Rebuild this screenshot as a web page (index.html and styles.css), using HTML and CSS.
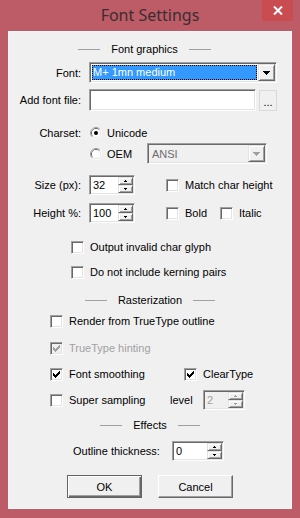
FILE: index.html
```html
<!DOCTYPE html>
<html lang="en">

<head>
    <meta charset="UTF-8">
    <meta name="viewport" content="width=device-width, initial-scale=1.0">
    <title>Font Settings</title>
    <link rel="stylesheet" href="styles.css">
</head>

<body>
    <div class="window">
        <div class="titlebar">
            <span class="title">Font Settings</span>
            <span class="close-btn">
                <svg width="10" height="9" viewBox="0 0 10 9"><path d="M1 0.5L9 8.5M9 0.5L1 8.5" stroke="#fff" stroke-width="2"/></svg>
            </span>
        </div>

        <div class="client">
            <!-- Font graphics -->
            <div class="section section-graphics"><span class="rule"></span><span>Font graphics</span><span class="rule"></span></div>

            <div class="row row-font">
                <span class="label">Font:</span>
                <div class="combo sunken font-combo">
                    <div class="combo-value"><span class="selected">M+ 1mn medium</span></div>
                    <span class="combo-drop raised"><svg width="7" height="4"><path d="M0 0H7V1H6V2H5V3H4V4H3V3H2V2H1V1H0Z"/></svg></span>
                </div>
            </div>

            <div class="row row-file">
                <span class="label">Add font file:</span>
                <div class="textbox sunken file-box"></div>
                <span class="browse-btn">...</span>
            </div>

            <div class="row row-charset">
                <span class="label">Charset:</span>
                <span class="option">
                    <svg class="radio" width="12" height="12">
                        <path d="M2.11 9.89A5.5 5.5 0 0 1 9.89 2.11" fill="none" stroke="#a0a0a0"/>
                        <path d="M9.89 2.11A5.5 5.5 0 0 1 2.11 9.89" fill="none" stroke="#fff"/>
                        <path d="M2.82 9.18A4.5 4.5 0 0 1 9.18 2.82" fill="none" stroke="#696969"/>
                        <path d="M9.18 2.82A4.5 4.5 0 0 1 2.82 9.18" fill="none" stroke="#e3e3e3"/>
                        <circle cx="6" cy="6" r="4" fill="#fff"/>
                        <circle cx="6" cy="6" r="2" fill="#000"/>
                    </svg>Unicode
                </span>
            </div>

            <div class="row row-oem">
                <span class="label"></span>
                <span class="option option-oem">
                    <svg class="radio" width="12" height="12">
                        <path d="M2.11 9.89A5.5 5.5 0 0 1 9.89 2.11" fill="none" stroke="#a0a0a0"/>
                        <path d="M9.89 2.11A5.5 5.5 0 0 1 2.11 9.89" fill="none" stroke="#fff"/>
                        <path d="M2.82 9.18A4.5 4.5 0 0 1 9.18 2.82" fill="none" stroke="#696969"/>
                        <path d="M9.18 2.82A4.5 4.5 0 0 1 2.82 9.18" fill="none" stroke="#e3e3e3"/>
                        <circle cx="6" cy="6" r="4" fill="#fff"/>
                    </svg>OEM
                </span>
                <div class="combo sunken combo-disabled charset-combo">
                    <div class="combo-value">ANSI</div>
                    <span class="combo-drop raised"><svg width="7" height="4"><path d="M0 0H7V1H6V2H5V3H4V4H3V3H2V2H1V1H0Z"/></svg></span>
                </div>
            </div>

            <div class="row row-size">
                <span class="label">Size (px):</span>
                <div class="spin sunken">
                    <span class="spin-value">32</span>
                    <span class="spin-buttons">
                        <span class="spin-btn raised"><svg width="3" height="2"><path d="M1 0H2V1H3V2H0V1H1Z"/></svg></span>
                        <span class="spin-btn raised"><svg width="3" height="2"><path d="M0 0H3V1H2V2H1V1H0Z"/></svg></span>
                    </span>
                </div>
                <span class="check check-side"><span class="box"></span>Match char height</span>
            </div>

            <div class="row row-height">
                <span class="label">Height %:</span>
                <div class="spin sunken">
                    <span class="spin-value">100</span>
                    <span class="spin-buttons">
                        <span class="spin-btn raised"><svg width="3" height="2"><path d="M1 0H2V1H3V2H0V1H1Z"/></svg></span>
                        <span class="spin-btn raised"><svg width="3" height="2"><path d="M0 0H3V1H2V2H1V1H0Z"/></svg></span>
                    </span>
                </div>
                <span class="check check-side check-bold"><span class="box"></span>Bold</span>
                <span class="check"><span class="box"></span>Italic</span>
            </div>

            <div class="row row-invalid">
                <span class="check"><span class="box"></span>Output invalid char glyph</span>
            </div>

            <div class="row row-kerning">
                <span class="check"><span class="box"></span>Do not include kerning pairs</span>
            </div>

            <!-- Rasterization -->
            <div class="section section-raster"><span class="rule"></span><span>Rasterization</span><span class="rule"></span></div>

            <div class="row row-raster row-outline-render">
                <span class="check"><span class="box"></span>Render from TrueType outline</span>
            </div>

            <div class="row row-raster row-hinting">
                <span class="check check-disabled">
                    <span class="box"><svg width="7" height="7"><path d="M0 2H1V3H2V4H3V3H4V2H5V1H6V0H7V3H6V4H5V5H4V6H3V7H2V6H1V5H0Z"/></svg></span>TrueType hinting
                </span>
            </div>

            <div class="row row-raster row-smoothing">
                <span class="check check-smoothing">
                    <span class="box"><svg width="7" height="7"><path d="M0 2H1V3H2V4H3V3H4V2H5V1H6V0H7V3H6V4H5V5H4V6H3V7H2V6H1V5H0Z"/></svg></span>Font smoothing
                </span>
                <span class="check">
                    <span class="box"><svg width="7" height="7"><path d="M0 2H1V3H2V4H3V3H4V2H5V1H6V0H7V3H6V4H5V5H4V6H3V7H2V6H1V5H0Z"/></svg></span>ClearType
                </span>
            </div>

            <div class="row row-raster row-super">
                <span class="check check-super"><span class="box"></span>Super sampling</span>
                <span class="level-label">level</span>
                <div class="spin sunken spin-disabled level-spin">
                    <span class="spin-value">2</span>
                    <span class="spin-buttons">
                        <span class="spin-btn raised"><svg width="3" height="2"><path d="M1 0H2V1H3V2H0V1H1Z"/></svg></span>
                        <span class="spin-btn raised"><svg width="3" height="2"><path d="M0 0H3V1H2V2H1V1H0Z"/></svg></span>
                    </span>
                </div>
            </div>

            <!-- Effects -->
            <div class="section section-effects"><span class="rule"></span><span>Effects</span><span class="rule"></span></div>

            <div class="row row-thickness">
                <span class="thickness-label">Outline thickness:</span>
                <div class="spin sunken thickness-spin">
                    <span class="spin-value">0</span>
                    <span class="spin-buttons">
                        <span class="spin-btn raised"><svg width="3" height="2"><path d="M1 0H2V1H3V2H0V1H1Z"/></svg></span>
                        <span class="spin-btn raised"><svg width="3" height="2"><path d="M0 0H3V1H2V2H1V1H0Z"/></svg></span>
                    </span>
                </div>
            </div>

            <div class="buttons">
                <button class="dlg-button default">OK</button>
                <button class="dlg-button">Cancel</button>
            </div>
        </div>
    </div>
</body>

</html>
```

FILE: styles.css
```css
body {
    margin: 0;
    font-family: 'Liberation Sans', Arial, sans-serif;
    font-size: 11px;
    color: #000;
}

.window {
    width: 300px;
    height: 518px;
    box-sizing: border-box;
    padding: 0 8px 9px;
    background-color: #bd5b66;
    display: flex;
    flex-direction: column;
}

.titlebar {
    height: 31px;
    flex: none;
    display: flex;
    align-items: center;
    justify-content: center;
    position: relative;
}

.title {
    font-family: 'Noto Sans', sans-serif;
    font-size: 16px;
    color: #3a2e32;
    margin-top: -1px;
}

.close-btn {
    position: absolute;
    top: 0;
    right: -1px;
    width: 31px;
    height: 21px;
    background-color: #c84c50;
    display: flex;
    align-items: center;
    justify-content: center;
}

.client {
    flex: 1;
    background-color: #f0f0f0;
    border: 1px solid #f8f8f8;
    padding-top: 8px;
}

/* 3D edges */
.sunken {
    box-sizing: border-box;
    border: 1px solid;
    border-color: #a0a0a0 #fff #fff #a0a0a0;
    box-shadow: inset 1px 1px 0 #696969, inset -1px -1px 0 #e3e3e3;
    padding: 1px;
}

.raised {
    box-sizing: border-box;
    border: 1px solid;
    border-color: #e3e3e3 #696969 #696969 #e3e3e3;
    box-shadow: inset 1px 1px 0 #fff, inset -1px -1px 0 #a0a0a0;
    background-color: #f0f0f0;
}

/* Section headers */
.section {
    height: 18px;
    display: flex;
    align-items: center;
    justify-content: center;
    gap: 11px;
}

.section .rule {
    width: 22px;
    height: 1px;
    background-color: #a0a0a0;
}

.section-graphics {
    padding-right: 11px;
}

.section-raster {
    margin-top: 9px;
}

.section-effects {
    margin-top: 6px;
}

/* Rows */
.row {
    display: flex;
    align-items: center;
    height: 20px;
}

.label {
    width: 72px;
    flex: none;
    text-align: right;
    margin-right: 8px;
}

.row-font {
    margin-top: 4px;
    height: 21px;
}

.row-file {
    margin-top: 6px;
    height: 22px;
}

.row-charset {
    margin-top: 12px;
}

.row-oem {
    height: 21px;
}

.row-size {
    margin-top: 11px;
}

.row-height {
    margin-top: 8px;
}

.row-invalid {
    margin-top: 14px;
    padding-left: 62px;
}

.row-kerning {
    margin-top: 5px;
    padding-left: 62px;
}

.row-raster {
    padding-left: 41px;
    margin-top: 6px;
}

.row-outline-render {
    margin-top: 2px;
}

.row-hinting {
    margin-top: 7px;
}

.row-thickness {
    margin-top: 7px;
    padding-left: 64px;
}

/* Combo boxes */
.combo {
    height: 21px;
    display: flex;
    background-color: #fff;
}

.font-combo {
    width: 188px;
}

.charset-combo {
    width: 120px;
}

.combo-value {
    flex: 1;
    padding: 1px;
    display: flex;
    align-items: stretch;
}

.selected {
    flex: 1;
    background-color: #3399ff;
    color: #fff;
    outline: 1px dotted #000;
    outline-offset: -1px;
    padding-left: 1px;
    line-height: 15px;
}

.combo-drop {
    width: 17px;
    flex: none;
    display: flex;
    align-items: center;
    justify-content: center;
}

.combo-disabled {
    background-color: #f0f0f0;
}

.combo-disabled .combo-value {
    color: #6d6d6d;
    padding-left: 3px;
    align-items: center;
}

.combo-disabled svg {
    fill: #a0a0a0;
}

/* Text box and browse button */
.textbox {
    background-color: #fff;
}

.file-box {
    width: 167px;
    height: 22px;
}

.browse-btn {
    width: 18px;
    height: 21px;
    box-sizing: border-box;
    margin-left: 3px;
    border: 1px solid #d9d9d9;
    text-align: center;
    line-height: 22px;
}

/* Radio options */
.option {
    display: flex;
    align-items: center;
    margin-left: 1px;
}

.radio {
    margin-right: 5px;
}

.option-oem {
    width: 57px;
}

/* Spin boxes */
.spin {
    width: 46px;
    height: 20px;
    display: flex;
    background-color: #fff;
}

.spin-value {
    flex: 1;
    padding-left: 2px;
    line-height: 16px;
}

.spin-buttons {
    width: 15px;
    display: flex;
    flex-direction: column;
}

.spin-btn {
    flex: 1;
    display: flex;
    align-items: center;
    justify-content: center;
}

.spin-disabled {
    background-color: #f0f0f0;
}

.spin-disabled .spin-value {
    color: #a0a0a0;
}

.spin-disabled svg {
    fill: #a0a0a0;
}

.level-spin {
    width: 42px;
}

.thickness-spin {
    width: 52px;
}

.level-label {
    width: 33px;
}

.thickness-label {
    width: 99px;
}

/* Check boxes */
.check {
    display: flex;
    align-items: center;
    gap: 6px;
}

.check .box {
    width: 13px;
    height: 13px;
    box-sizing: border-box;
    border: 1px solid;
    border-color: #a0a0a0 #fff #fff #a0a0a0;
    box-shadow: inset 1px 1px 0 #696969, inset -1px -1px 0 #e3e3e3;
    background-color: #fff;
    display: flex;
    align-items: center;
    justify-content: center;
}

.check-side {
    margin-left: 31px;
}

.check-bold {
    width: 54px;
}

.check-smoothing {
    width: 134px;
}

.check-super {
    width: 120px;
}

.check-disabled {
    color: #a0a0a0;
}

.check-disabled .box {
    background-color: #f0f0f0;
}

.check-disabled svg {
    fill: #a0a0a0;
}

/* Dialog buttons */
.buttons {
    display: flex;
    gap: 16px;
    padding-left: 58px;
    margin-top: 14px;
}

.dlg-button {
    width: 75px;
    height: 23px;
    font-family: 'Liberation Sans', Arial, sans-serif;
    font-size: 11px;
    color: #000;
    background-color: #f0f0f0;
    border: 1px solid;
    border-color: #fff #696969 #696969 #fff;
    box-shadow: inset -1px -1px 0 #a0a0a0;
    padding: 0;
}

.dlg-button.default {
    border-color: #646464;
    box-shadow: inset 1px 1px 0 #fff, inset -1px -1px 0 #696969, inset -2px -2px 0 #a0a0a0;
}
```
